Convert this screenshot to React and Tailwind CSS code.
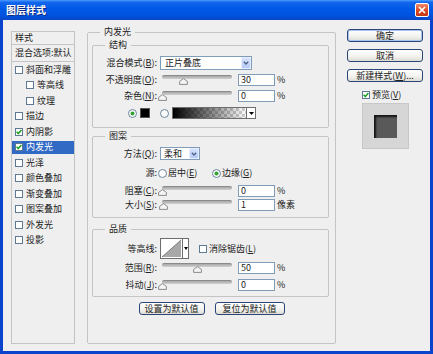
import React from "react";

const FONT = "font-['Noto_Sans_CJK_SC','Noto_Sans_CJK_JP',sans-serif]";

function Check({ checked, className = "" }) {
  return (
    <span
      className={
        "inline-flex w-[8px] h-[8px] shrink-0 items-center justify-center border border-[#5f7893] bg-white " +
        className
      }
    >
      {checked && (
        <svg width="6" height="6" viewBox="0 0 6 6">
          <path d="M0.6 2.8 L2.3 4.6 L5.4 1.1" stroke="#21a121" strokeWidth="1.5" fill="none" />
        </svg>
      )}
    </span>
  );
}

function Radio({ checked }) {
  return (
    <svg width="9" height="9" viewBox="0 0 9 9" className="shrink-0">
      <circle cx="4.5" cy="4.5" r="4" fill="#fbfbfb" stroke="#5f7893" strokeWidth="0.9" />
      {checked && <circle cx="4.5" cy="4.5" r="2" fill="#33a333" />}
    </svg>
  );
}

function Slider({ value }) {
  const left = Math.round((value / 100) * 70) - 4;
  return (
    <div className="relative w-[70px] h-[12px] shrink-0">
      <div className="absolute left-0 right-0 top-[1px] h-[4px] rounded-[2px] border-t border-[#8a8a8a] bg-[linear-gradient(to_bottom,#a8a8a8,#d0d0d0)]" />
      <svg className="absolute top-[4px]" style={{ left }} width="9" height="7" viewBox="0 0 9 7">
        <path d="M4.5 0.6 L8.4 3.4 V6.4 H0.6 V3.4 Z" fill="#f4f4f4" stroke="#808080" strokeWidth="0.9" />
      </svg>
    </div>
  );
}

function Num({ v }) {
  return (
    <div className="w-[37px] h-[12px] shrink-0 border border-[#7f9db9] bg-white pl-[2px] text-[9px] leading-[10px]">
      {v}
    </div>
  );
}

function Chevron() {
  return (
    <svg width="6" height="4" viewBox="0 0 6 4">
      <path d="M0.8 0.8 L3 3 L5.2 0.8" stroke="#4d6185" strokeWidth="1.3" fill="none" />
    </svg>
  );
}

function Group({ title, className = "", children }) {
  return (
    <div className={"relative flex flex-col rounded-[2px] border border-[#c4c4c4] " + className}>
      <span className="absolute left-[12px] top-[-7px] bg-[#efefef] px-[4px] text-[9px] leading-[12px]">{title}</span>
      {children}
    </div>
  );
}

function Label({ children }) {
  return <span className="w-[64px] shrink-0 text-right text-[9px] leading-[12px]">{children}</span>;
}

function Btn({ children, className = "" }) {
  return (
    <div
      className={
        "flex items-center justify-center rounded-[3px] border border-[#2a4677] bg-[linear-gradient(to_bottom,#ffffff,#f3f3ef_55%,#dedcd4)] text-[9px] leading-none " +
        className
      }
    >
      {children}
    </div>
  );
}

const items = [
  { t: "斜面和浮雕" },
  { t: "等高线", indent: true },
  { t: "纹理", indent: true },
  { t: "描边" },
  { t: "内阴影", c: true },
  { t: "内发光", c: true, sel: true },
  { t: "光泽" },
  { t: "颜色叠加" },
  { t: "渐变叠加" },
  { t: "图案叠加" },
  { t: "外发光" },
  { t: "投影" },
];

export default function App() {
  return (
    <div className={"w-[433px] h-[354px] flex flex-col bg-[#0a44cc] text-[#222222] " + FONT}>
      {/* Title bar */}
      <div className="h-[20px] flex items-center justify-between pl-[6px] pr-[4px] bg-[linear-gradient(to_bottom,#4a9bff_0%,#1266ec_12%,#0058e8_45%,#0052de_80%,#0a47c4_100%)]">
        <span className="text-white font-bold text-[10px] leading-none [text-shadow:1px_1px_0_#0a2a80]">图层样式</span>
        <div className="w-[14px] h-[14px] rounded-[2px] border border-white bg-[linear-gradient(to_bottom,#f08a6a,#d9431c_60%,#c43a14)] flex items-center justify-center">
          <svg width="8" height="8" viewBox="0 0 8 8">
            <path d="M1 1 L7 7 M7 1 L1 7" stroke="white" strokeWidth="1.7" />
          </svg>
        </div>
      </div>

      {/* Body */}
      <div className="flex-1 mx-[3px] mb-[3px] bg-[#efefef] flex items-start pl-[8px]">
        {/* Left list */}
        <div className="mt-[11px] w-[64px] h-[313px] border border-[#c4c4c4] flex flex-col">
          <div className="h-[13px] border-b border-[#c4c4c4] pl-[3px] text-[9px] leading-[12px]">样式</div>
          <div className="h-[17px] border-b border-[#c4c4c4] pl-[3px] flex items-center text-[9px] leading-[12px] whitespace-nowrap overflow-hidden">
            混合选项:默认
          </div>
          {items.map((it) => (
            <div key={it.t} className="h-[15.5px] flex items-center">
              <div
                className={
                  "w-full h-[13px] flex items-center " +
                  (it.indent ? "pl-[14px] " : "pl-[3px] ") +
                  (it.sel ? "bg-[#316ac5] text-white" : "")
                }
              >
                <Check checked={it.c} />
                <span className="ml-[3px] text-[9px] leading-[12px] whitespace-nowrap">{it.t}</span>
              </div>
            </div>
          ))}
        </div>

        {/* Main group */}
        <Group title="内发光" className="ml-[12px] mt-[12px] w-[249px] h-[312px] pt-[12px]">
          {/* 结构 */}
          <Group title="结构" className="ml-[4px] w-[237px] h-[83px]">
            <div className="mt-[10px] h-[14px] flex items-center">
              <Label>
                混合模式(<u>B</u>):
              </Label>
              <div className="ml-[3px] w-[92px] h-[14px] flex items-center border border-[#7f9db9] bg-white">
                <span className="flex-1 pl-[4px] text-[9px] leading-[12px]">正片叠底</span>
                <span className="w-[10px] h-[12px] rounded-[2px] border border-[#e4ecfd] bg-[linear-gradient(to_bottom,#d6e2fd,#b6cbf8)] flex items-center justify-center">
                  <Chevron />
                </span>
              </div>
            </div>
            <div className="mt-[4px] h-[12px] flex items-center">
              <Label>
                不透明度(<u>O</u>):
              </Label>
              <div className="ml-[5px]">
                <Slider value={30} />
              </div>
              <div className="ml-[6px]">
                <Num v="30" />
              </div>
              <span className="ml-[2px] text-[9px] leading-[12px]">%</span>
            </div>
            <div className="mt-[4px] h-[12px] flex items-center">
              <Label>
                杂色(<u>N</u>):
              </Label>
              <div className="ml-[5px]">
                <Slider value={0} />
              </div>
              <div className="ml-[6px]">
                <Num v="0" />
              </div>
              <span className="ml-[2px] text-[9px] leading-[12px]">%</span>
            </div>
            <div className="mt-[5px] h-[12px] flex items-center pl-[35px]">
              <Radio checked />
              <div className="ml-[3px] w-[10px] h-[10px] bg-black border border-[#555]" />
              <div className="ml-[10px]">
                <Radio />
              </div>
              <div className="ml-[3px] w-[84px] h-[12px] border border-[#6d6d6d] flex">
                <div className="flex-1 bg-[repeating-conic-gradient(#cfcfcf_0%_25%,#ffffff_0%_50%)] bg-[length:6px_6px]">
                  <div className="w-full h-full bg-[linear-gradient(to_right,#000000,rgba(0,0,0,0))]" />
                </div>
                <div className="w-[9px] h-full bg-white border-l border-[#6d6d6d] flex items-center justify-center">
                  <svg width="5" height="3" viewBox="0 0 5 3">
                    <path d="M0 0 H5 L2.5 3 Z" fill="#000" />
                  </svg>
                </div>
              </div>
            </div>
          </Group>

          {/* 图案 */}
          <Group title="图案" className="ml-[4px] mt-[8px] w-[237px] h-[82px]">
            <div className="mt-[10px] h-[13px] flex items-center">
              <Label>
                方法(<u>Q</u>):
              </Label>
              <div className="ml-[3px] w-[40px] h-[13px] flex items-center border border-[#7f9db9] bg-white">
                <span className="flex-1 pl-[3px] text-[9px] leading-[11px]">柔和</span>
                <span className="w-[10px] h-[11px] rounded-[2px] border border-[#e4ecfd] bg-[linear-gradient(to_bottom,#d6e2fd,#b6cbf8)] flex items-center justify-center">
                  <Chevron />
                </span>
              </div>
            </div>
            <div className="mt-[7px] h-[12px] flex items-center">
              <Label>源:</Label>
              <div className="ml-[1px] w-[54px] flex items-center">
                <Radio />
                <span className="ml-[1px] text-[9px] leading-[12px]">
                  居中(<u>E</u>)
                </span>
              </div>
              <Radio checked />
              <span className="ml-[1px] text-[9px] leading-[12px]">
                边缘(<u>G</u>)
              </span>
            </div>
            <div className="mt-[6px] h-[12px] flex items-center">
              <Label>
                阻塞(<u>C</u>):
              </Label>
              <div className="ml-[5px]">
                <Slider value={0} />
              </div>
              <div className="ml-[6px]">
                <Num v="0" />
              </div>
              <span className="ml-[2px] text-[9px] leading-[12px]">%</span>
            </div>
            <div className="mt-[2px] h-[12px] flex items-center">
              <Label>
                大小(<u>S</u>):
              </Label>
              <div className="ml-[5px]">
                <Slider value={1} />
              </div>
              <div className="ml-[6px]">
                <Num v="1" />
              </div>
              <span className="ml-[2px] text-[9px] leading-[12px]">像素</span>
            </div>
          </Group>

          {/* 品质 */}
          <Group title="品质" className="ml-[4px] mt-[11px] w-[237px] h-[68px]">
            <div className="mt-[8px] h-[21px] flex items-center">
              <Label>等高线:</Label>
              <div className="ml-[3px] w-[29px] h-[21px] border border-[#6d6d6d] bg-white flex">
                <svg width="21" height="19" viewBox="0 0 21 19" className="shrink-0">
                  <path d="M1 18 L20 1 V18 Z" fill="#a8a8a8" />
                  <path d="M1 18 L20 1" stroke="#666" strokeWidth="0.8" />
                </svg>
                <div className="flex-1 border-l border-[#6d6d6d] flex items-center justify-center">
                  <svg width="4" height="3" viewBox="0 0 4 3">
                    <path d="M0 0 H4 L2 3 Z" fill="#000" />
                  </svg>
                </div>
              </div>
              <Check className="ml-[10px]" />
              <span className="ml-[2px] text-[9px] leading-[12px]">
                消除锯齿(<u>L</u>)
              </span>
            </div>
            <div className="mt-[3px] h-[12px] flex items-center">
              <Label>
                范围(<u>R</u>):
              </Label>
              <div className="ml-[5px]">
                <Slider value={50} />
              </div>
              <div className="ml-[6px]">
                <Num v="50" />
              </div>
              <span className="ml-[2px] text-[9px] leading-[12px]">%</span>
            </div>
            <div className="mt-[5px] h-[12px] flex items-center">
              <Label>
                抖动(<u>J</u>):
              </Label>
              <div className="ml-[5px]">
                <Slider value={0} />
              </div>
              <div className="ml-[6px]">
                <Num v="0" />
              </div>
              <span className="ml-[2px] text-[9px] leading-[12px]">%</span>
            </div>
          </Group>

          <div className="mt-[5px] flex justify-center gap-[10px]">
            <Btn className="w-[66px] h-[13px]">设置为默认值</Btn>
            <Btn className="w-[70px] h-[13px]">复位为默认值</Btn>
          </div>
        </Group>

        {/* Right column */}
        <div className="ml-[11px] mt-[9px] w-[76px] flex flex-col">
          <Btn className="h-[13px] shadow-[inset_0_0_0_1px_#a9c3f0]">确定</Btn>
          <Btn className="mt-[7px] h-[13px]">取消</Btn>
          <Btn className="mt-[7px] h-[13px]">
            新建样式(<u>W</u>)...
          </Btn>
          <div className="mt-[8px] h-[10px] flex items-center pl-[15px]">
            <Check checked />
            <span className="ml-[2px] text-[9px] leading-[12px]">
              预览(<u>V</u>)
            </span>
          </div>
          <div className="mt-[3px] ml-[15px] w-[47px] h-[46px] border border-[#c8c8c8] bg-[#d6d6d6] flex items-center justify-center">
            <div className="w-[23px] h-[23px] bg-[#595959] shadow-[inset_2px_2px_2px_#151515]" />
          </div>
        </div>
      </div>
    </div>
  );
}
